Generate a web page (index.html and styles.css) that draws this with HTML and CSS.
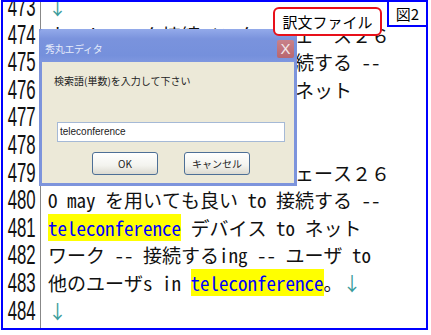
FILE: index.html
```html
<!DOCTYPE html>
<html lang="ja">
<head>
    <meta charset="UTF-8">
    <title>図2 訳文ファイル</title>
    <link rel="stylesheet" href="styles.css">
</head>
<body>
    <div class="frame">
        <div class="editor">
            <div class="gutter">
                <div class="num"><span>473</span></div>
                <div class="num"><span>474</span></div>
                <div class="num"><span>475</span></div>
                <div class="num"><span>476</span></div>
                <div class="num"><span>477</span></div>
                <div class="num"><span>478</span></div>
                <div class="num"><span>479</span></div>
                <div class="num"><span>480</span></div>
                <div class="num"><span>481</span></div>
                <div class="num"><span>482</span></div>
                <div class="num"><span>483</span></div>
                <div class="num"><span>484</span></div>
            </div>
            <div class="text">
                <div class="line"><span class="eol">↓</span></div>
                <div class="line">ネットワーク接続インターフェース２６</div>
                <div class="line">コンピュータ２２ may be 接続する --</div>
                <div class="line">インターフェース２４ to a ネット</div>
                <div class="line">ワーク２８。<span class="eol">↓</span></div>
                <div class="line"><span class="eol">↓</span></div>
                <div class="line">ネットワーク接続インターフェース２６</div>
                <div class="line">O may を用いても良い to 接続する --</div>
                <div class="line"><span class="hit">teleconference</span> デバイス to ネット</div>
                <div class="line">ワーク -- 接続するing -- ユーザ to</div>
                <div class="line">他のユーザs in <span class="hit">teleconference</span>。<span class="eol">↓</span></div>
                <div class="line"><span class="eol">↓</span></div>
            </div>
        </div>

        <!-- search dialog on top of the editor -->
        <div class="dialog">
            <div class="dialog-title">
                <span class="title-text">秀丸エディタ</span>
                <span class="close-btn">X</span>
            </div>
            <div class="dialog-body">
                <div class="prompt">検索語(単数)を入力して下さい</div>
                <div class="search-input">teleconference</div>
                <div class="buttons">
                    <div class="btn">OK</div>
                    <div class="btn">キャンセル</div>
                </div>
            </div>
        </div>

        <div class="file-label">訳文ファイル</div>
        <div class="fig-label">図2</div>
    </div>
</body>
</html>
```

FILE: styles.css
```css
body {
    margin: 0;
    background-color: #fff;
    font-family: "Noto Sans CJK JP", sans-serif;
}

.frame {
    position: relative;
    box-sizing: border-box;
    width: 427px;
    height: 330px;
    margin-left: 1px;
    border: 2px solid #0000ff;
    overflow: hidden;
    background-color: #fff;
}

.editor {
    display: flex;
    margin-top: -9px;
}

.gutter {
    flex: none;
    width: 37px;
    border-right: 1px solid #888;
    padding-bottom: 20px;
}

.num {
    display: flex;
    justify-content: flex-end;
    height: 27.6px;
    line-height: 27.6px;
    padding-right: 4px;
    font-family: "Liberation Sans", sans-serif;
    font-size: 28px;
    color: #111;
}

.num span {
    flex: none;
    transform: scaleX(0.6);
    transform-origin: right center;
}

.text {
    flex: 1;
    min-width: 0;
    padding-left: 7px;
    font-family: "Noto Sans Mono CJK JP", "Noto Sans CJK JP", monospace;
    font-size: 19px;
    color: #111;
}

.line {
    height: 27.6px;
    line-height: 27.6px;
    white-space: nowrap;
}

.eol {
    color: #3a9c9c;
    font-weight: 300;
}

.hit {
    display: inline-block;
    background-color: #ffff00;
    color: #0000ff;
    line-height: 27px;
}

/* dialog */
.dialog {
    position: absolute;
    left: 36px;
    top: 27px;
    width: 258px;
    height: 157px;
    box-sizing: border-box;
    background-color: #7d94dc;
    padding: 0 3px 3px 3px;
    display: flex;
    flex-direction: column;
}

.dialog-title {
    height: 33px;
    box-sizing: border-box;
    margin: 0 -3px;
    padding: 6px 3px 0 6px;
    display: flex;
    align-items: center;
    justify-content: space-between;
    background: linear-gradient(#93aaea, #7a93dd 30%, #7590dc 80%, #7f97df);
    border-radius: 5px 5px 0 0;
}

.title-text {
    color: #e6ecfb;
    font-size: 10px;
    letter-spacing: -0.3px;
}

.close-btn {
    width: 17px;
    height: 18px;
    line-height: 18px;
    text-align: center;
    background: linear-gradient(#c98189, #b86670);
    border-radius: 2px;
    color: #f4e8ea;
    font-family: "Liberation Sans", sans-serif;
    font-size: 15px;
}

.dialog-body {
    flex: 1;
    background-color: #ece9d8;
    padding: 12px 9px 0 12px;
}

.prompt {
    font-size: 10px;
    line-height: 14px;
    color: #222;
}

.search-input {
    margin: 34px 0 0 3px;
    height: 20px;
    box-sizing: border-box;
    border: 1px solid #a5b9d6;
    background-color: #fff;
    padding-left: 2px;
    font-family: "Liberation Sans", sans-serif;
    font-size: 10px;
    line-height: 18px;
    color: #222;
}

.buttons {
    display: flex;
    justify-content: center;
    gap: 26px;
    margin-top: 10px;
    padding-left: 3px;
}

.btn {
    width: 66px;
    height: 23px;
    box-sizing: border-box;
    border: 1px solid #4d6f96;
    border-radius: 3px;
    background: linear-gradient(#ffffff, #f3f3ee 60%, #dcdad0);
    text-align: center;
    line-height: 21px;
    font-size: 10px;
    color: #222;
}

/* labels */
.file-label {
    position: absolute;
    left: 270px;
    top: 5px;
    width: 109px;
    height: 29px;
    box-sizing: border-box;
    border: 2px solid #e8101a;
    border-radius: 6px;
    background-color: #fff;
    text-align: center;
    line-height: 25px;
    font-size: 15px;
    color: #000;
}

.fig-label {
    position: absolute;
    right: -2px;
    top: -2px;
    width: 41px;
    height: 27px;
    box-sizing: border-box;
    border: 2px solid #0000ff;
    background-color: #fff;
    text-align: center;
    line-height: 23px;
    font-size: 15px;
    color: #000;
}
```
